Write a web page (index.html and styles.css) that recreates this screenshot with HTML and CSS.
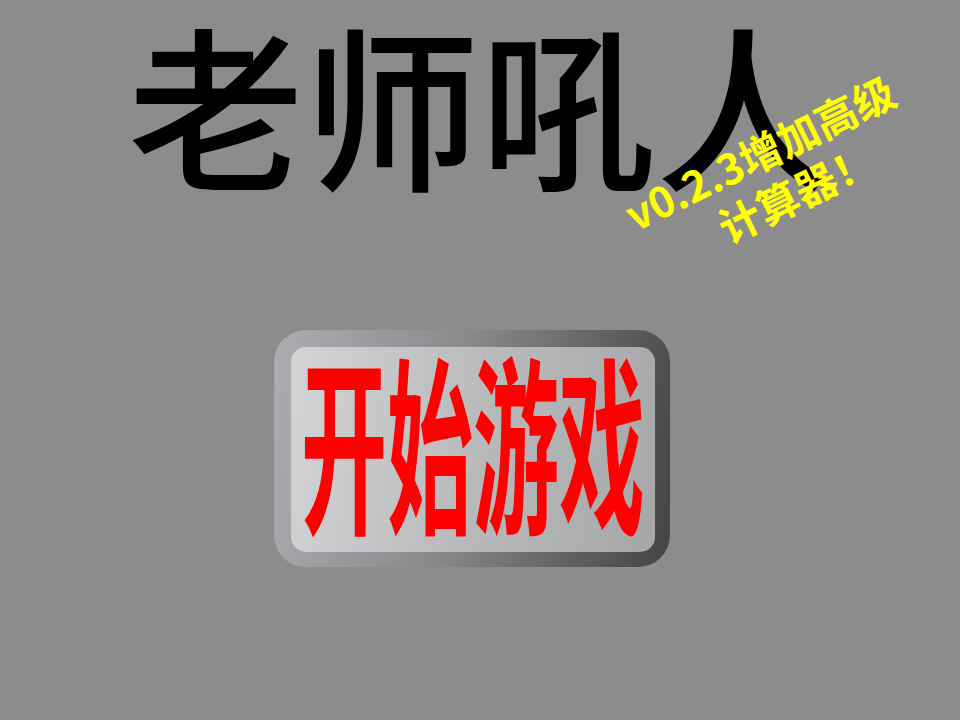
FILE: index.html
```html
<!DOCTYPE html>
<html lang="zh">
<head>
<meta charset="utf-8">
<title>老师吼人</title>
<link rel="stylesheet" href="styles.css">
</head>
<body>
<div class="screen">
  <h1 class="title">老师吼人</h1>
  <div class="start">
    <div class="start-face"><span class="start-label">开始游戏</span></div>
  </div>
  <div class="badge"><span class="badge-line">v0.2.3增加高级</span><span class="badge-line second">计算器！</span></div>
</div>
</body>
</html>
```
FILE: styles.css
```css
html, body {
  margin: 0;
  padding: 0;
  background: #8c8c8c;
}
.screen {
  position: relative;
  width: 960px;
  height: 720px;
  overflow: hidden;
  background: #8c8c8c;
  font-family: "Noto Sans CJK SC", "Noto Sans", sans-serif;
}
.title {
  margin: 0;
  padding-top: 5px;
  text-align: center;
  font-size: 176px;
  font-weight: 500;
  line-height: 1.1;
  color: #000;
}
.start {
  margin: 131px 0 0 274px;
  width: 396px;
  height: 237px;
  box-sizing: border-box;
  padding: 17px 15px 15px 17px;
  border-radius: 32px;
  background: linear-gradient(100deg, #acadb1 0%, #8a8a8d 45%, #434345 100%);
}
.start-face {
  height: 100%;
  box-sizing: border-box;
  padding-bottom: 22px;
  border-radius: 15px;
  background: linear-gradient(100deg, #d3d4d6 0%, #b9babc 50%, #a6a7a9 100%);
  display: flex;
  align-items: center;
  justify-content: center;
}
.start-label {
  display: inline-block;
  font-size: 86px;
  font-weight: 700;
  line-height: 1;
  color: #ff0000;
  transform: scaleY(2.2);
}
.badge {
  position: absolute;
  left: 601px;
  top: 123px;
  width: 340px;
  text-align: center;
  font-size: 42px;
  font-weight: 700;
  line-height: 52px;
  color: #ffff00;
  transform: rotate(-26deg);
}
.badge-line {
  display: block;
}
.badge-line.second {
  padding-left: 30px;
}
```
